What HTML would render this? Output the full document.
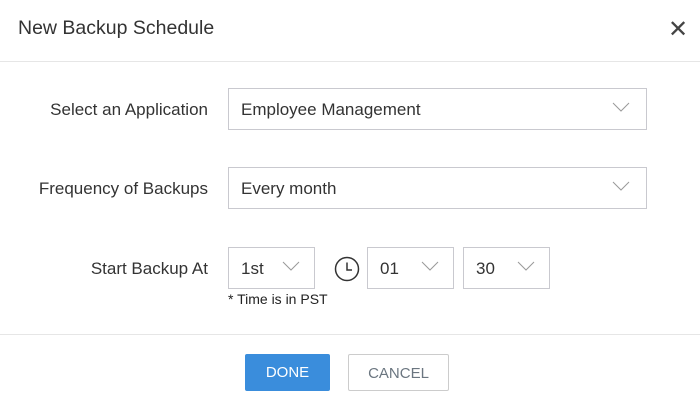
<!DOCTYPE html>
<html><head><style>
*{margin:0;padding:0;box-sizing:border-box}
body{width:700px;height:406px;background:#fff;font-family:"Liberation Sans",sans-serif;color:#333;position:relative;overflow:hidden}
.a{position:absolute}
.title{left:18px;top:17px;font-size:19.5px;color:#333}
.x{left:668px;top:15px;font-size:24px;color:#444}
.hr{left:0;width:700px;height:1px;background:#e6e6e6}
.lbl{font-size:17px;color:#333;text-align:right;width:208px;left:0}
.box{border:1px solid #c9c9cf;height:42px;font-size:17px;padding-left:12px;line-height:41px;color:#333}
.chev{position:absolute;top:13px}
.btn{height:37px;font-size:15px;text-align:center;line-height:37px;border-radius:2px}
</style></head><body>
<div class="a title">New Backup Schedule</div>
<div class="a x">✕</div>
<div class="a hr" style="top:61px"></div>

<div class="a lbl" style="top:100px">Select an Application</div>
<div class="a box" style="left:228px;top:88px;width:419px">Employee Management<svg class="chev" style="right:16px" width="18" height="10"><polyline points="1,1 9,9 17,1" fill="none" stroke="#999" stroke-width="1"/></svg></div>

<div class="a lbl" style="top:179px">Frequency of Backups</div>
<div class="a box" style="left:228px;top:167px;width:419px">Every month<svg class="chev" style="right:16px" width="18" height="10"><polyline points="1,1 9,9 17,1" fill="none" stroke="#999" stroke-width="1"/></svg></div>

<div class="a lbl" style="top:259px">Start Backup At</div>
<div class="a box" style="left:228px;top:247px;width:87px">1st<svg class="chev" style="right:14px" width="18" height="10"><polyline points="1,1 9,9 17,1" fill="none" stroke="#999" stroke-width="1"/></svg></div>
<svg class="a" style="left:334px;top:256px" width="26" height="26" viewBox="0 0 26 26"><circle cx="13" cy="13" r="11.5" fill="none" stroke="#333" stroke-width="1.5"/><path d="M13 6.5V14H18" fill="none" stroke="#333" stroke-width="1.5"/></svg>
<div class="a box" style="left:367px;top:247px;width:87px">01<svg class="chev" style="right:14px" width="18" height="10"><polyline points="1,1 9,9 17,1" fill="none" stroke="#999" stroke-width="1"/></svg></div>
<div class="a box" style="left:463px;top:247px;width:87px">30<svg class="chev" style="right:14px" width="18" height="10"><polyline points="1,1 9,9 17,1" fill="none" stroke="#999" stroke-width="1"/></svg></div>
<div class="a" style="left:228px;top:291px;font-size:14px;color:#222">* Time is in PST</div>

<div class="a hr" style="top:334px"></div>
<div class="a btn" style="left:245px;top:354px;width:85px;background:#3a8ddc;color:#fff">DONE</div>
<div class="a btn" style="left:348px;top:354px;width:101px;border:1px solid #ccc;color:#6b7680">CANCEL</div>
</body></html>
